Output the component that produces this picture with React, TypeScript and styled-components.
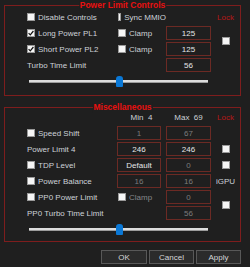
import React from 'react';
import styled, { createGlobalStyle } from 'styled-components';

const Global = createGlobalStyle`
  html, body { margin: 0; padding: 0; background: #1f1f1f; }
  body {
    font-family: "Liberation Sans", Arial, sans-serif;
    font-size: 8px;
    color: #cdd2d8;
  }
`;

const Page = styled.div`
  width: 250px;
  height: 267px;
  box-sizing: border-box;
  padding: 5px 9px 0 4px;
  display: flex;
  flex-direction: column;
`;

const Group = styled.section<{ $h: number; $mt: number; $pt: number }>`
  position: relative;
  box-sizing: border-box;
  height: ${(p) => p.$h}px;
  margin-top: ${(p) => p.$mt}px;
  border: 1px solid #7e1d1d;
  padding: ${(p) => p.$pt}px 0 0 22px;
`;

const Title = styled.div`
  position: absolute;
  top: -6px;
  left: 50%;
  transform: translateX(-50%);
  padding: 0 1px;
  background: #1f1f1f;
  color: #e81010;
  font-weight: bold;
  font-size: 8.5px;
  line-height: 11px;
  white-space: nowrap;
`;

const Grid = styled.div`
  display: grid;
  grid-template-columns: 90px 49px 45px 1fr;
  grid-auto-rows: 16px;
  align-items: center;
`;

const CheckLabel = styled.label<{ $disabled?: boolean; $shift?: number }>`
  display: flex;
  align-items: center;
  gap: 3px;
  margin-left: ${(p) => p.$shift ?? 0}px;
  color: ${(p) => (p.$disabled ? '#85888c' : '#cdd2d8')};
  white-space: nowrap;
`;

const Box = styled.span`
  width: 8px;
  height: 8px;
  box-sizing: border-box;
  background: #f6f6f6;
  border: 1px solid #9a9a9a;
  display: flex;
  align-items: center;
  justify-content: center;
`;

const Text = styled.span`
  white-space: nowrap;
`;

const Field = styled.div<{ $dim?: boolean; $w?: number }>`
  width: ${(p) => p.$w ?? 45}px;
  height: 14px;
  box-sizing: border-box;
  border: 1px solid #6c2a24;
  display: flex;
  align-items: center;
  justify-content: center;
  color: ${(p) => (p.$dim ? '#7c7c7c' : '#e4e6e8')};
`;

const Lock = styled.div`
  justify-self: center;
  color: #b81818;
`;

const Note = styled.div`
  justify-self: center;
  color: #cdd2d8;
`;

const Cell = styled.div<{ $span?: number; $col?: number }>`
  grid-row: span ${(p) => p.$span ?? 1};
  ${(p) => (p.$col ? `grid-column: ${p.$col};` : '')}
  justify-self: center;
  align-self: center;
  display: flex;
`;

const Head = styled.div`
  justify-self: center;
  white-space: nowrap;
`;

const SliderRow = styled.div<{ $h: number }>`
  grid-column: 1 / 4;
  height: ${(p) => p.$h}px;
  position: relative;
  margin: 0 3px 0 2px;
  display: flex;
  align-items: center;
`;

const Track = styled.div`
  width: 100%;
  height: 2px;
  background: #dcdcdc;
  border-bottom: 1px solid #9c9c9c;
`;

const Thumb = styled.div`
  position: absolute;
  top: 50%;
  width: 7px;
  height: 11px;
  margin-top: -5px;
  margin-left: -3px;
  background: #0a78d6;
  border-radius: 3px 3px 1px 1px;
`;

const Buttons = styled.div`
  margin-top: 8px;
  display: flex;
  justify-content: flex-end;
  gap: 2px;
`;

const Button = styled.button<{ $w: number }>`
  width: ${(p) => p.$w}px;
  height: 14px;
  box-sizing: border-box;
  padding: 0;
  background: #2b2b2b;
  border: 1px solid #585858;
  color: #d4d6d8;
  font-family: "Liberation Sans", Arial, sans-serif;
  font-size: 8px;
`;

const Tick = () => (
  <svg width="6" height="6" viewBox="0 0 6 6">
    <path d="M0.6 3.1 L2.3 4.8 L5.4 1.0" stroke="#111" strokeWidth="1.2" fill="none" />
  </svg>
);

const Check: React.FC<{ label?: string; checked?: boolean; disabled?: boolean; shift?: number }> = ({
  label,
  checked,
  disabled,
  shift,
}) => (
  <CheckLabel $disabled={disabled} $shift={shift}>
    <Box>{checked && <Tick />}</Box>
    {label && <Text>{label}</Text>}
  </CheckLabel>
);

const Slider: React.FC<{ value: number; h: number }> = ({ value, h }) => (
  <SliderRow $h={h}>
    <Track />
    <Thumb style={{ left: `${value * 100}%` }} />
  </SliderRow>
);

export default function App() {
  return (
    <>
      <Global />
      <Page>
        <Group $h={91} $mt={0} $pt={3}>
          <Title>Power Limit Controls</Title>
          <Grid>
            <Check label="Disable Controls" />
            <Check label="Sync MMIO" shift={1} />
            <div />
            <Lock>Lock</Lock>

            <Check label="Long Power PL1" checked />
            <Check label="Clamp" shift={1} />
            <Field>125</Field>
            <Cell $span={2} $col={4}>
              <Check />
            </Cell>

            <Check label="Short Power PL2" checked />
            <Check label="Clamp" shift={1} />
            <Field>125</Field>

            <Text>Turbo Time Limit</Text>
            <div />
            <Field>56</Field>
            <div />

            <Slider value={0.5} h={16} />
          </Grid>
        </Group>

        <Group $h={135} $mt={11} $pt={1}>
          <Title>Miscellaneous</Title>
          <Grid>
            <div />
            <Head>Min&nbsp; 4</Head>
            <Head>Max&nbsp; 69</Head>
            <Lock>Lock</Lock>

            <Check label="Speed Shift" />
            <Field $w={44} $dim>1</Field>
            <Field $dim>67</Field>
            <div />

            <Text>Power Limit 4</Text>
            <Field $w={44}>246</Field>
            <Field>246</Field>
            <Cell>
              <Check />
            </Cell>

            <Check label="TDP Level" />
            <Field $w={44}>Default</Field>
            <Field $dim>0</Field>
            <Cell>
              <Check />
            </Cell>

            <Check label="Power Balance" />
            <Field $w={44} $dim>16</Field>
            <Field $dim>16</Field>
            <Note>iGPU</Note>

            <Check label="PP0 Power Limit" />
            <Check label="Clamp" disabled shift={1} />
            <Field $dim>0</Field>
            <Cell $span={2}>
              <Check />
            </Cell>

            <Text>PP0 Turbo Time Limit</Text>
            <div />
            <Field $dim>56</Field>

            <Slider value={0.5} h={14} />
          </Grid>
        </Group>

        <Buttons>
          <Button $w={46}>OK</Button>
          <Button $w={45}>Cancel</Button>
          <Button $w={45}>Apply</Button>
        </Buttons>
      </Page>
    </>
  );
}
